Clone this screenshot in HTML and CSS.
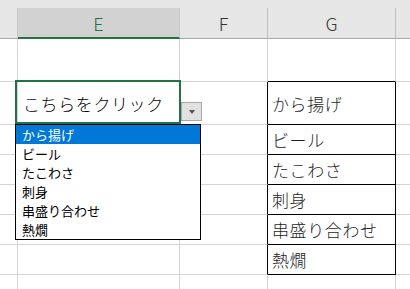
FILE: index.html
```html
<!DOCTYPE html>
<html lang="ja">
<head>
<meta charset="utf-8">
<link rel="stylesheet" href="styles.css">
</head>
<body>
<div class="sheet">
  <div class="topstrip"></div>
  <div class="grid">
    <div class="hd hd-d"></div>
    <div class="hd hd-sel">E</div>
    <div class="hd">F</div>
    <div class="hd">G</div>
    <div class="hd hd-h"></div>

    <div class="c"></div><div class="c"></div><div class="c"></div><div class="c g-top"></div><div class="c"></div>

    <div class="c"></div>
    <div class="c e-active">
      <span class="ctext">こちらをクリック</span>
      <div class="sel-border"></div>
      <div class="dd-btn"><span class="tri"></span></div>
      <div class="dd-list">
        <div class="dd-item on">から揚げ</div>
        <div class="dd-item">ビール</div>
        <div class="dd-item">たこわさ</div>
        <div class="dd-item">刺身</div>
        <div class="dd-item">串盛り合わせ</div>
        <div class="dd-item">熱燗</div>
      </div>
    </div>
    <div class="c f-edge"></div><div class="c g-box"><span class="ctext">から揚げ</span></div><div class="c"></div>

    <div class="c"></div><div class="c"></div><div class="c f-edge"></div><div class="c g-box"><span class="ctext">ビール</span></div><div class="c"></div>
    <div class="c"></div><div class="c"></div><div class="c f-edge"></div><div class="c g-box"><span class="ctext">たこわさ</span></div><div class="c"></div>
    <div class="c"></div><div class="c"></div><div class="c f-edge"></div><div class="c g-box"><span class="ctext">刺身</span></div><div class="c"></div>
    <div class="c"></div><div class="c"></div><div class="c f-edge"></div><div class="c g-box"><span class="ctext">串盛り合わせ</span></div><div class="c"></div>
    <div class="c"></div><div class="c"></div><div class="c f-edge"></div><div class="c g-box"><span class="ctext">熱燗</span></div><div class="c"></div>
    <div class="c"></div><div class="c"></div><div class="c"></div><div class="c"></div><div class="c"></div>
  </div>
</div>
</body>
</html>
```

FILE: styles.css
```css
* { box-sizing: border-box; }
html, body {
  margin: 0;
  padding: 0;
  background: #fff;
  overflow: hidden;
}
body {
  font-family: "Noto Sans CJK JP", "Noto Sans", sans-serif;
}
.sheet {
  width: 410px;
  height: 289px;
  overflow: hidden;
}
.topstrip {
  height: 8px;
  background: #e6e6e6;
}
.grid {
  display: grid;
  grid-template-columns: 18px 162px 88px 128px 30px;
  grid-template-rows: 31px 43px 43px 30px 30px 30px 30px 30px 30px 30px;
}
.hd {
  background: #e6e6e6;
  border-right: 1px solid #bfbfbf;
  border-bottom: 1px solid #a6a6a6;
  font-family: "Noto Sans CJK JP", "Noto Sans", sans-serif;
  font-weight: 300;
  font-size: 18px;
  color: #333;
  display: flex;
  align-items: center;
  justify-content: center;
  line-height: 1;
}
.hd-d { border-right-color: #c8c8c8; }
.hd-h { border-right: none; }
.hd-sel {
  background: #d2d2d2;
  color: #217346;
  border-right-color: #c8c8c8;
  border-bottom: 2px solid #217346;
}
.c {
  border-right: 1px solid #d4d4d4;
  border-bottom: 1px solid #d4d4d4;
  display: flex;
  align-items: center;
  position: relative;
}
.ctext {
  font-size: 17px;
  font-weight: 300;
  letter-spacing: 0.6px;
  color: #000;
  white-space: nowrap;
  line-height: 1;
}
.e-active { padding-left: 5px; }
.g-box { padding-left: 4px; border-right-color: #000; border-bottom-color: #000; }
.g-box .ctext { color: #1e1e1e; }
.g-top { border-bottom-color: #000; }
.f-edge { border-right-color: #000; }

.sel-border {
  position: absolute;
  left: -3px;
  top: -2px;
  width: 166px;
  height: 44px;
  border: 2px solid #217346;
  pointer-events: none;
}
.dd-btn {
  position: absolute;
  left: 163px;
  top: 20px;
  width: 21px;
  height: 19px;
  background: #e1e1e1;
  border: 1px solid #a8a8a8;
  display: flex;
  align-items: center;
  justify-content: center;
}
.tri {
  width: 0;
  height: 0;
  border-left: 3.5px solid transparent;
  border-right: 3.5px solid transparent;
  border-top: 4px solid #505050;
  margin-top: 1px;
}
.dd-list {
  position: absolute;
  left: -3px;
  top: 42px;
  width: 186px;
  height: 116px;
  border: 1px solid #000;
  background: #fff;
  z-index: 2;
}
.dd-item {
  height: 19px;
  padding-left: 6px;
  font-size: 13px;
  line-height: 19px;
  color: #000;
  white-space: nowrap;
}
.dd-item.on {
  background: #0078d7;
  color: #fff;
}
```
